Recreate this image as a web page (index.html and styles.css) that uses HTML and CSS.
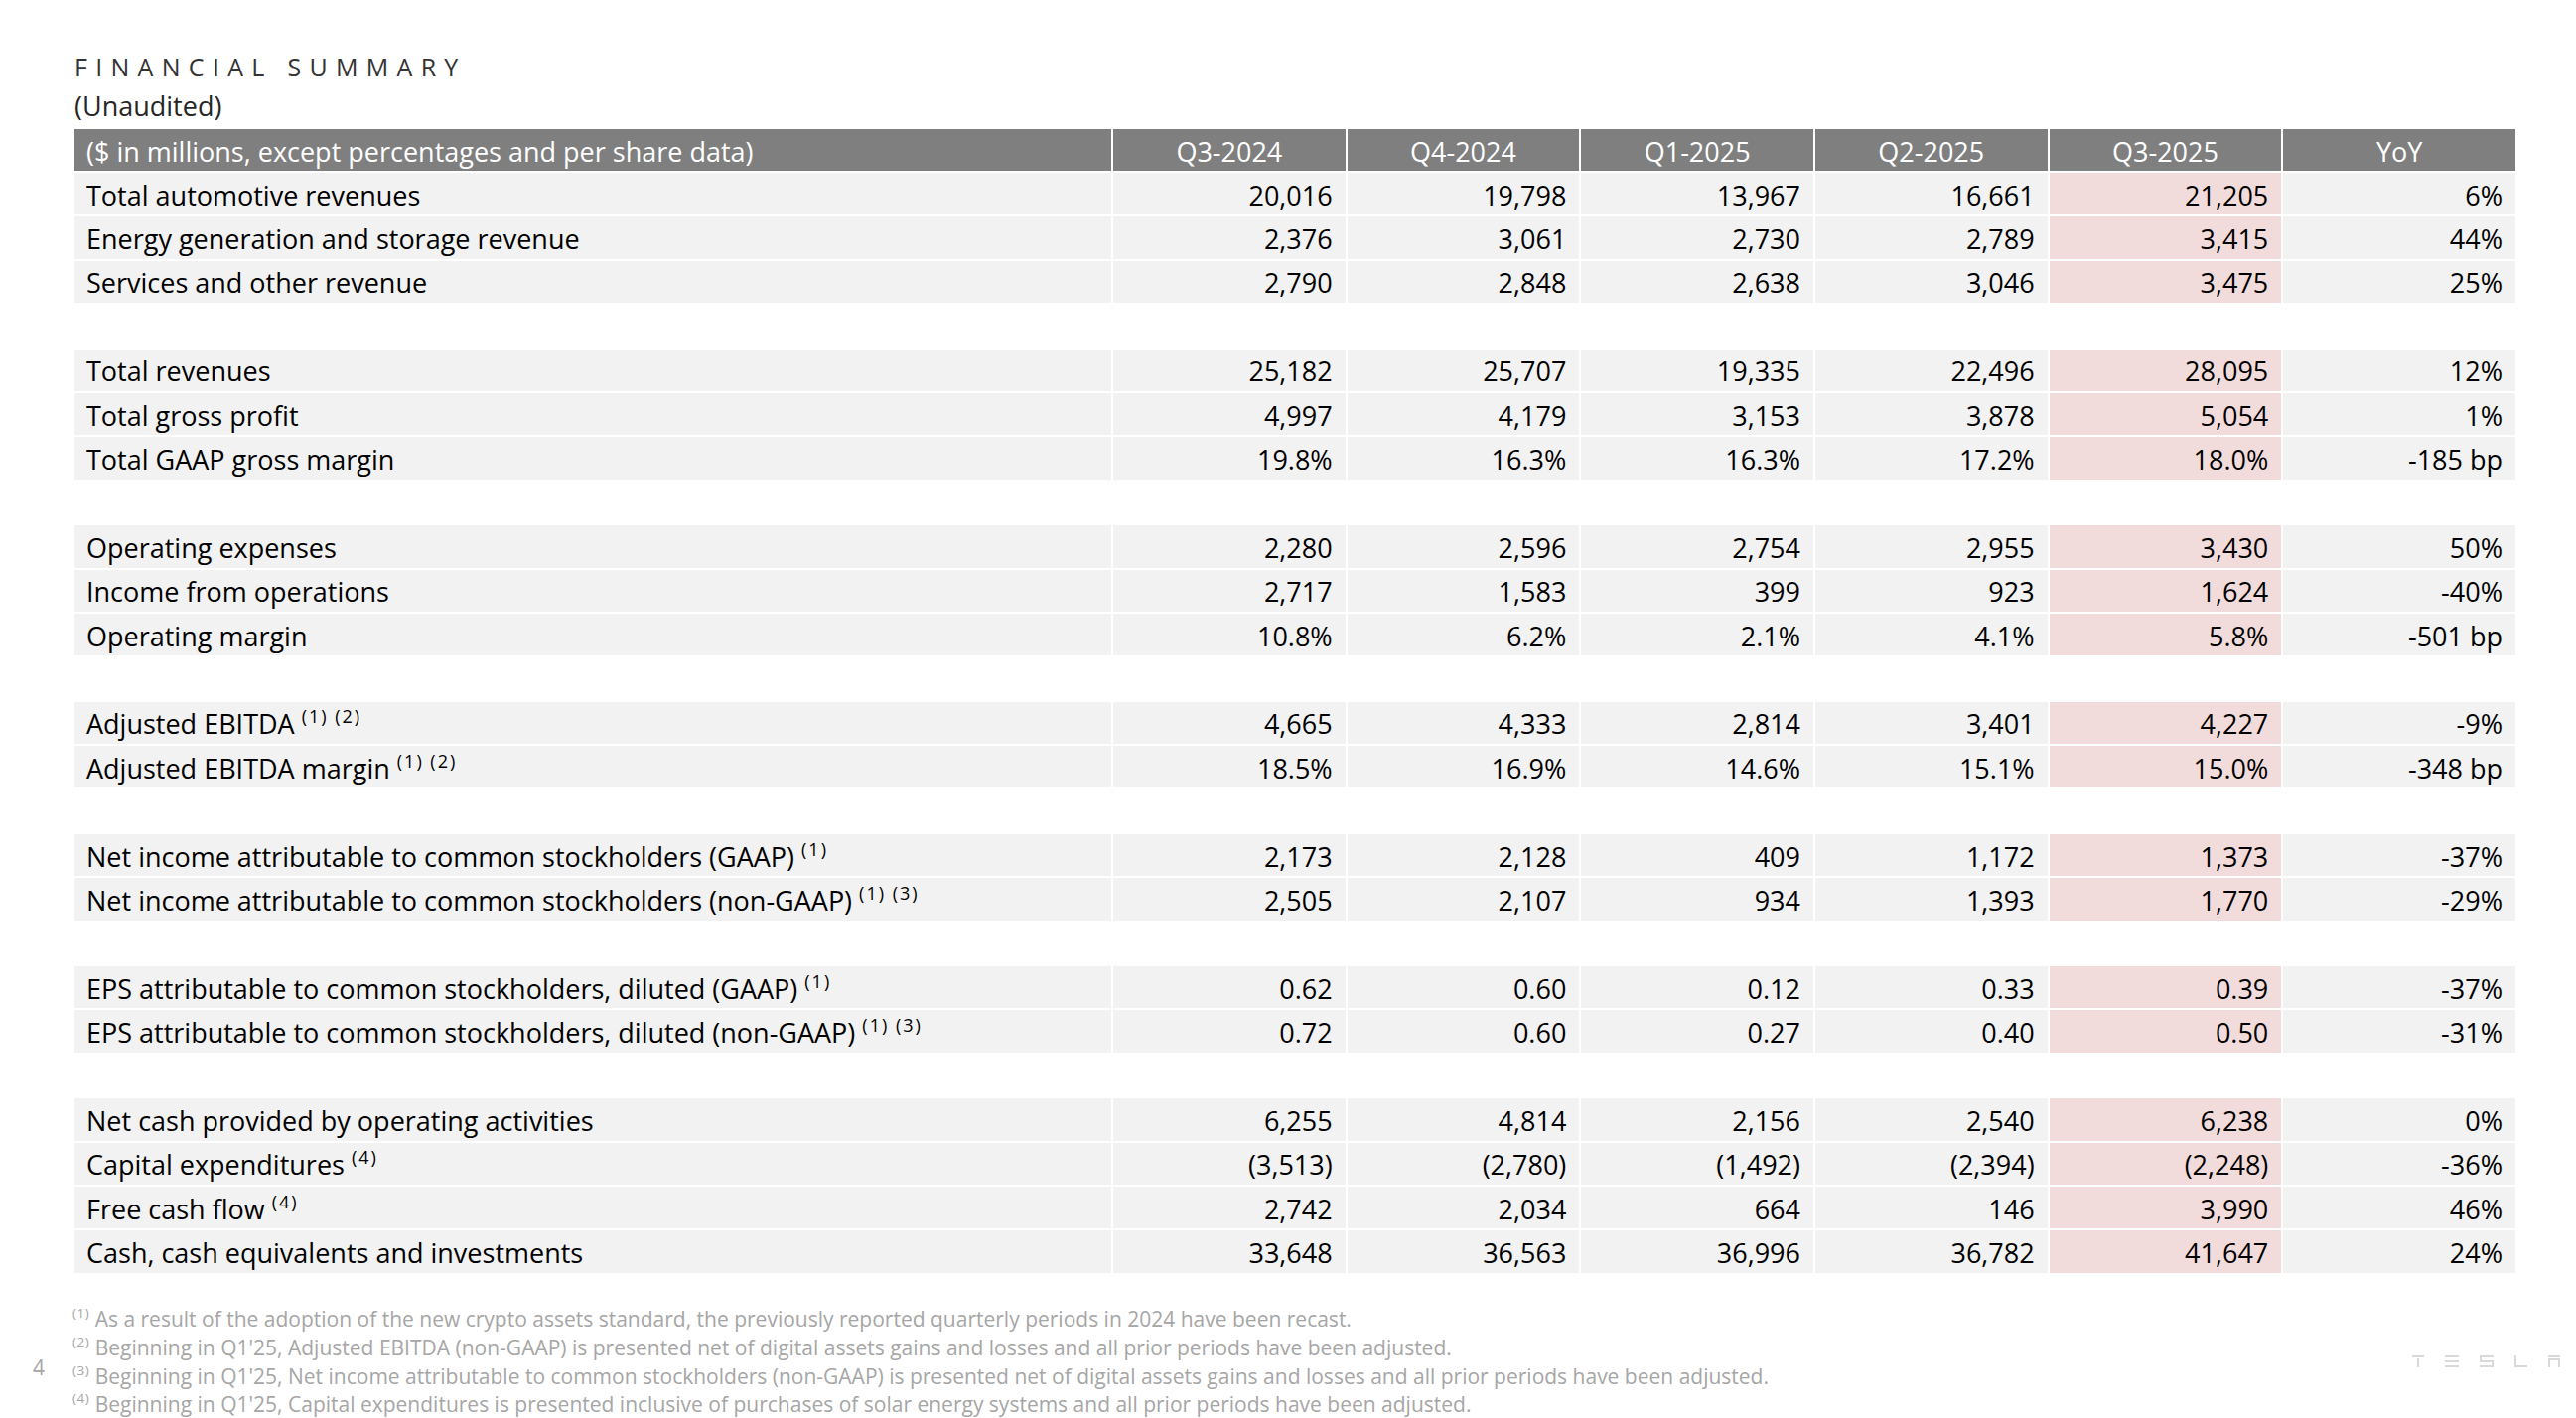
FILE: index.html
```html
<!DOCTYPE html>
<html lang="en">
<head>
<meta charset="utf-8">
<title>Financial Summary</title>
<link rel="stylesheet" href="styles.css">
</head>
<body>
<div class="slide">
  <header class="head">
    <div class="title">FINANCIAL SUMMARY</div>
    <div class="sub">(Unaudited)</div>
  </header>

  <table class="fin">
    <colgroup>
      <col class="c-label">
      <col class="c-num"><col class="c-num"><col class="c-num"><col class="c-num"><col class="c-num"><col class="c-num">
    </colgroup>
    <thead>
      <tr>
        <th class="label">($ in millions, except percentages and per share data)</th>
        <th>Q3-2024</th><th>Q4-2024</th><th>Q1-2025</th><th>Q2-2025</th><th>Q3-2025</th><th>YoY</th>
      </tr>
    </thead>
    <tbody>
      <tr><td class="label">Total automotive revenues</td><td>20,016</td><td>19,798</td><td>13,967</td><td>16,661</td><td class="hl">21,205</td><td>6%</td></tr>
      <tr><td class="label">Energy generation and storage revenue</td><td>2,376</td><td>3,061</td><td>2,730</td><td>2,789</td><td class="hl">3,415</td><td>44%</td></tr>
      <tr><td class="label">Services and other revenue</td><td>2,790</td><td>2,848</td><td>2,638</td><td>3,046</td><td class="hl">3,475</td><td>25%</td></tr>
      <tr class="gap"><td colspan="7"></td></tr>
      <tr><td class="label">Total revenues</td><td>25,182</td><td>25,707</td><td>19,335</td><td>22,496</td><td class="hl">28,095</td><td>12%</td></tr>
      <tr><td class="label">Total gross profit</td><td>4,997</td><td>4,179</td><td>3,153</td><td>3,878</td><td class="hl">5,054</td><td>1%</td></tr>
      <tr><td class="label">Total GAAP gross margin</td><td>19.8%</td><td>16.3%</td><td>16.3%</td><td>17.2%</td><td class="hl">18.0%</td><td>-185 bp</td></tr>
      <tr class="gap"><td colspan="7"></td></tr>
      <tr><td class="label">Operating expenses</td><td>2,280</td><td>2,596</td><td>2,754</td><td>2,955</td><td class="hl">3,430</td><td>50%</td></tr>
      <tr><td class="label">Income from operations</td><td>2,717</td><td>1,583</td><td>399</td><td>923</td><td class="hl">1,624</td><td>-40%</td></tr>
      <tr><td class="label">Operating margin</td><td>10.8%</td><td>6.2%</td><td>2.1%</td><td>4.1%</td><td class="hl">5.8%</td><td>-501 bp</td></tr>
      <tr class="gap"><td colspan="7"></td></tr>
      <tr><td class="label">Adjusted EBITDA <sup class="fn">(1) (2)</sup></td><td>4,665</td><td>4,333</td><td>2,814</td><td>3,401</td><td class="hl">4,227</td><td>-9%</td></tr>
      <tr><td class="label">Adjusted EBITDA margin <sup class="fn">(1) (2)</sup></td><td>18.5%</td><td>16.9%</td><td>14.6%</td><td>15.1%</td><td class="hl">15.0%</td><td>-348 bp</td></tr>
      <tr class="gap"><td colspan="7"></td></tr>
      <tr><td class="label">Net income attributable to common stockholders (GAAP) <sup class="fn">(1)</sup></td><td>2,173</td><td>2,128</td><td>409</td><td>1,172</td><td class="hl">1,373</td><td>-37%</td></tr>
      <tr><td class="label">Net income attributable to common stockholders (non-GAAP) <sup class="fn">(1) (3)</sup></td><td>2,505</td><td>2,107</td><td>934</td><td>1,393</td><td class="hl">1,770</td><td>-29%</td></tr>
      <tr class="gap"><td colspan="7"></td></tr>
      <tr><td class="label">EPS attributable to common stockholders, diluted (GAAP) <sup class="fn">(1)</sup></td><td>0.62</td><td>0.60</td><td>0.12</td><td>0.33</td><td class="hl">0.39</td><td>-37%</td></tr>
      <tr><td class="label">EPS attributable to common stockholders, diluted (non-GAAP) <sup class="fn">(1) (3)</sup></td><td>0.72</td><td>0.60</td><td>0.27</td><td>0.40</td><td class="hl">0.50</td><td>-31%</td></tr>
      <tr class="gap"><td colspan="7"></td></tr>
      <tr><td class="label">Net cash provided by operating activities</td><td>6,255</td><td>4,814</td><td>2,156</td><td>2,540</td><td class="hl">6,238</td><td>0%</td></tr>
      <tr><td class="label">Capital expenditures <sup class="fn">(4)</sup></td><td>(3,513)</td><td>(2,780)</td><td>(1,492)</td><td>(2,394)</td><td class="hl">(2,248)</td><td>-36%</td></tr>
      <tr><td class="label">Free cash flow <sup class="fn">(4)</sup></td><td>2,742</td><td>2,034</td><td>664</td><td>146</td><td class="hl">3,990</td><td>46%</td></tr>
      <tr><td class="label">Cash, cash equivalents and investments</td><td>33,648</td><td>36,563</td><td>36,996</td><td>36,782</td><td class="hl">41,647</td><td>24%</td></tr>
    </tbody>
  </table>

  <footer class="foot">
    <div class="pg">4</div>
    <div class="notes">
      <p><sup class="nfn">(1)</sup> As a result of the adoption of the new crypto assets standard, the previously reported quarterly periods in 2024 have been recast.</p>
      <p><sup class="nfn">(2)</sup> Beginning in Q1'25, Adjusted EBITDA (non-GAAP) is presented net of digital assets gains and losses and all prior periods have been adjusted.</p>
      <p><sup class="nfn">(3)</sup> Beginning in Q1'25, Net income attributable to common stockholders (non-GAAP) is presented net of digital assets gains and losses and all prior periods have been adjusted.</p>
      <p><sup class="nfn">(4)</sup> Beginning in Q1'25, Capital expenditures is presented inclusive of purchases of solar energy systems and all prior periods have been adjusted.</p>
    </div>
    <div class="logo">
      <svg width="150" height="12" viewBox="0 0 150 12" aria-label="Tesla">
        <g fill="#d9d9d9">
          <rect x="0" y="0" width="12" height="2"/>
          <rect x="5" y="3" width="2" height="9"/>
          <rect x="33" y="0" width="14" height="2"/>
          <rect x="33" y="5" width="14" height="2"/>
          <rect x="33" y="10" width="14" height="2"/>
          <rect x="68" y="0" width="14" height="2"/>
          <rect x="68" y="2" width="2" height="4"/>
          <rect x="68" y="5" width="14" height="2"/>
          <rect x="80" y="6" width="2" height="5"/>
          <rect x="68" y="10" width="14" height="2"/>
          <rect x="103" y="0" width="2" height="12"/>
          <rect x="103" y="10" width="13" height="2"/>
          <rect x="137" y="0" width="12" height="2"/>
          <rect x="137" y="3" width="12" height="2"/>
          <rect x="137" y="3" width="2" height="9"/>
          <rect x="147" y="3" width="2" height="9"/>
        </g>
      </svg>
    </div>
  </footer>
</div>
</body>
</html>
```

FILE: styles.css
```css
html, body {
  margin: 0;
  padding: 0;
  background: #ffffff;
}

body {
  font-family: "Open Sans", "Liberation Sans", sans-serif;
  color: #000000;
}

.slide {
  width: 2594px;
  height: 1428px;
  overflow: hidden;
}

.head {
  padding: 52px 0 0 75px;
}

.title {
  font-size: 25px;
  line-height: 30px;
  letter-spacing: 8.3px;
  color: #333333;
}

.sub {
  margin-top: 7px;
  font-size: 27px;
  line-height: 36px;
  color: #262626;
}

.fin {
  margin: 3px 0 0 73px;
  width: 2462px;
  table-layout: fixed;
  border-collapse: separate;
  border-spacing: 2px;
  font-size: 27px;
}

.c-label { width: 1044px; }
.c-num { width: 233.67px; }

.fin th {
  height: 40px;
  padding: 2px 0 0 0;
  background: #7f7f7f;
  color: #ffffff;
  font-weight: 400;
  text-align: center;
  vertical-align: middle;
  white-space: nowrap;
}

.fin td {
  height: 40.4px;
  padding: 2px 13px 0 0;
  background: #f2f2f2;
  text-align: right;
  vertical-align: middle;
  white-space: nowrap;
}

.fin th.label,
.fin td.label {
  text-align: left;
  padding-left: 12px;
}

.fin td.hl {
  background: #f2dcdb;
}

.fin tr.gap td {
  background: transparent;
}

.fn {
  font-size: 18px;
  line-height: 0;
  letter-spacing: 2px;
  vertical-align: 11px;
}

.foot {
  display: flex;
  align-items: flex-start;
  margin-top: 30.5px;
  padding: 0 15px 0 33px;
}

.pg {
  width: 40px;
  padding-top: 48.3px;
  font-size: 21px;
  line-height: 28.7px;
  color: #a6a6a6;
}

.notes {
  flex: 1;
  font-size: 21px;
  line-height: 28.7px;
  color: #a6a6a6;
}

.notes p {
  margin: 0;
  white-space: nowrap;
}

.nfn {
  font-size: 13.5px;
  line-height: 0;
  letter-spacing: 0.5px;
  vertical-align: 8.7px;
}

.logo {
  padding-top: 50.5px;
  line-height: 0;
}
```
